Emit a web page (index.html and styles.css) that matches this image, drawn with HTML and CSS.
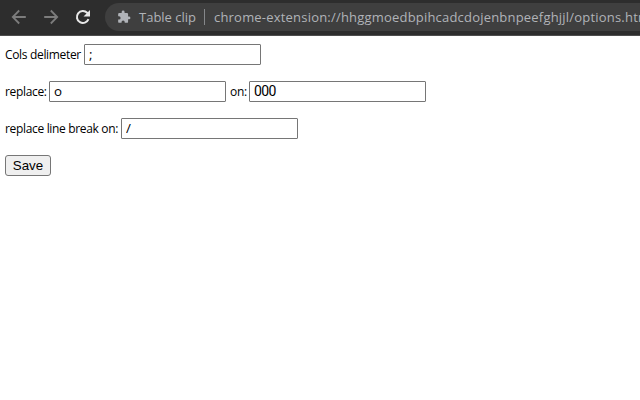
FILE: index.html
```html
<!DOCTYPE html>
<html lang="en">
<head>
<meta charset="utf-8">
<title>Table clip</title>
<link rel="stylesheet" href="styles.css">
</head>
<body>
<header class="toolbar">
  <svg class="nav dim" viewBox="0 0 16 16"><path d="M14.8 8H2.2M8.200 1.500L1.800 8l6.400 6.500"/></svg>
  <svg class="nav dim" viewBox="0 0 16 16"><path d="M1.200 8h12.600M7.800 1.500L14.200 8l-6.400 6.500"/></svg>
  <svg class="nav" viewBox="0 0 16 16"><path d="M13.500 10.200A6 6 0 1 1 12.200 3.800L14 5.600"/><path class="fill" d="M15 1v6.500H8.500z"/></svg>
  <div class="address">
    <svg class="puzzle" viewBox="0 0 24 24"><path d="M20.5 11H19V7a2 2 0 0 0-2-2h-4V3.500a2.500 2.500 0 0 0-5 0V5H4a2 2 0 0 0-2 2v3.800h1.500a2.700 2.700 0 0 1 0 5.400H2V20a2 2 0 0 0 2 2h3.800v-1.500a2.700 2.700 0 0 1 5.400 0V22H17a2 2 0 0 0 2-2v-4h1.500a2.500 2.500 0 0 0 0-5z"/></svg>
    <span class="name">Table clip</span>
    <span class="divider"></span>
    <span class="url">chrome-extension://hhggmoedbpihcadcdojenbnpeefghjjl/options.html</span>
  </div>
</header>
<main class="form">
  <div class="row"><label class="l1" for="a">Cols delimeter</label><input id="a" value=";"></div>
  <div class="row"><label class="l2" for="b">replace:</label><input id="b" value="o"><label class="l3" for="c">on:</label><input id="c" class="digits" value="000"></div>
  <div class="row"><label class="l4" for="d">replace line break on:</label><input id="d" value="/"></div>
  <button>Save</button>
</main>
</body>
</html>
```
FILE: styles.css
```css
* { box-sizing: border-box; }
body { margin: 0; background: #fff; color: #000; overflow: hidden; font: 12px "Open Sans", sans-serif; }
.toolbar { height: 36px; background: #2d2d2d; display: flex; align-items: center; padding: 0 0 1px 11px; border-bottom: 1px solid #4d4d4d; }
.nav { width: 16px; height: 16px; margin-right: 16px; flex: none; fill: none; stroke: #e8e8e8; stroke-width: 2; }
.nav.dim { stroke: #7c7c7c; stroke-width: 1.8; }
.nav .fill { fill: #e8e8e8; stroke: none; }
.address { flex: none; display: flex; align-items: center; width: 560px; height: 28px; margin-left: -2px; padding-left: 12px; border-radius: 14px 0 0 14px; background: #3f3f3f; color: #b0b3b8; font-size: 13px; white-space: nowrap; }
.puzzle { width: 14px; height: 14px; fill: #b0b3b8; flex: none; margin-bottom: 1px; }
.name { width: 57px; margin-left: 8px; }
.divider { width: 1px; height: 16px; background: #85878a; margin: 0 9px 0 8px; }
.url { letter-spacing: 0.2px; }
.form { padding: 8px 5px; }
.row { display: flex; height: 21px; margin-bottom: 16px; align-items: center; white-space: nowrap; letter-spacing: -0.33px; }
.l1 { width: 79px; }
.l2 { width: 44px; }
.l3 { width: 19px; margin-left: 4px; }
.l4 { width: 116px; }
input { width: 177px; height: 21px; margin: 0; padding: 0 3px 2px 4px; border: 1px solid #767676; border-radius: 1px; font: 13.333px "Open Sans", sans-serif; color: #000; }
.digits { font: 14px Roboto, sans-serif; padding-bottom: 1px; letter-spacing: -0.6px; }
button { display: block; width: 46px; height: 21px; padding: 0; border: 1px solid #767676; border-radius: 3px; background: #efefef; font: 13.333px "Liberation Sans", sans-serif; color: #000; }
```
